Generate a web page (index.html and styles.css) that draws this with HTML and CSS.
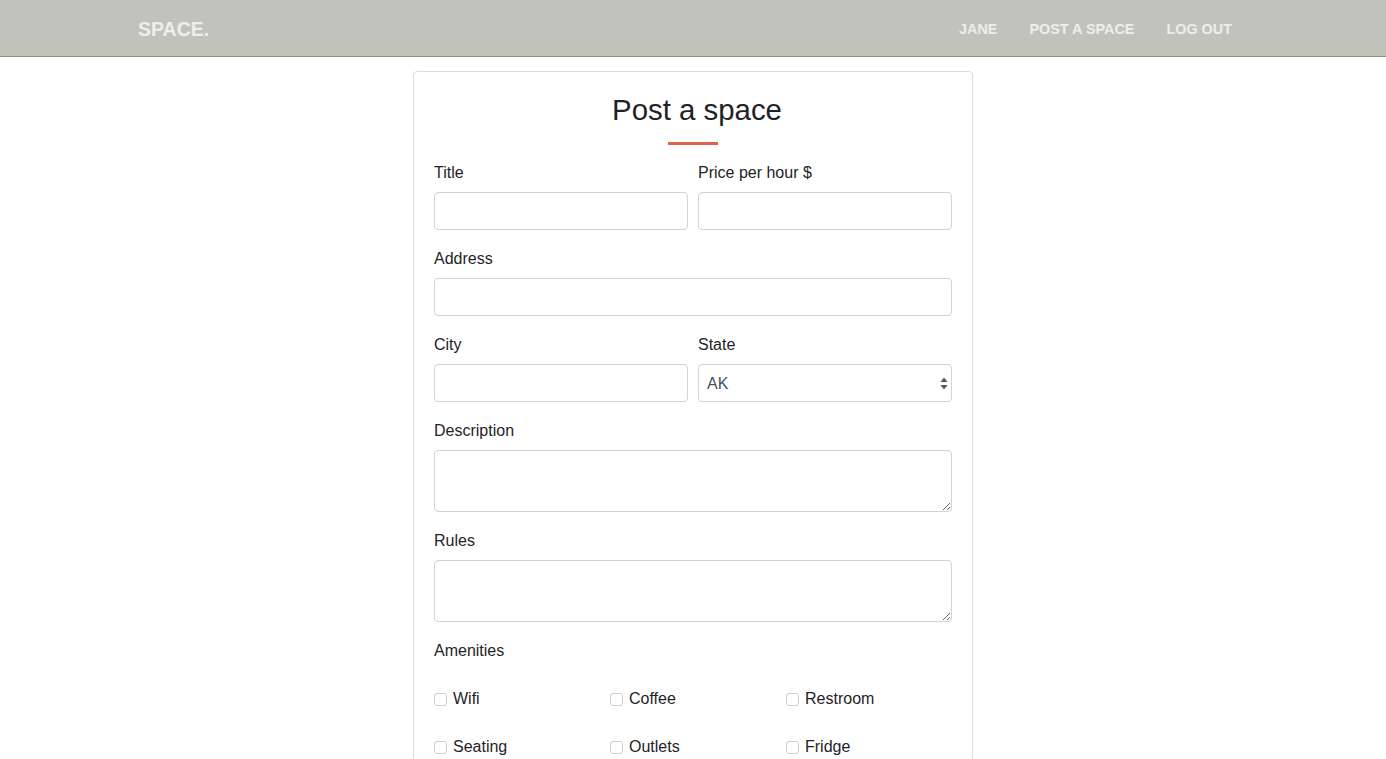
FILE: index.html
```html
<!DOCTYPE html>
<html>
<head>
<meta charset="utf-8">
<link rel="stylesheet" href="styles.css">
</head>
<body>
<nav class="navbar">
  <div class="nav-inner">
    <a class="brand" href="#">SPACE.</a>
    <div class="nav-links">
      <a href="#">JANE</a>
      <a href="#">POST A SPACE</a>
      <a href="#">LOG OUT</a>
    </div>
  </div>
</nav>
<main class="page">
  <div class="card">
    <h2 class="card-title">Post a space</h2>
    <div class="accent"></div>
    <form class="form">
      <div class="row">
        <div class="group">
          <label>Title</label>
          <input class="control" type="text">
        </div>
        <div class="group">
          <label>Price per hour $</label>
          <input class="control" type="text">
        </div>
      </div>
      <div class="group">
        <label>Address</label>
        <input class="control" type="text">
      </div>
      <div class="row">
        <div class="group">
          <label>City</label>
          <input class="control" type="text">
        </div>
        <div class="group">
          <label>State</label>
          <div class="select-wrap">
            <select class="control select">
              <option>AK</option>
            </select>
            <svg class="select-arrows" width="8" height="13" viewBox="0 0 8 13"><path d="M4 0.5 L7.5 5 L0.5 5 Z" fill="#555"/><path d="M4 12.5 L7.5 8 L0.5 8 Z" fill="#555"/></svg>
          </div>
        </div>
      </div>
      <div class="group">
        <label>Description</label>
        <textarea class="control area" rows="2"></textarea>
      </div>
      <div class="group">
        <label>Rules</label>
        <textarea class="control area" rows="2"></textarea>
      </div>
      <div class="group">
        <label>Amenities</label>
      </div>
      <div class="amenities">
        <label class="check"><input type="checkbox"><span>Wifi</span></label>
        <label class="check"><input type="checkbox"><span>Coffee</span></label>
        <label class="check"><input type="checkbox"><span>Restroom</span></label>
        <label class="check"><input type="checkbox"><span>Seating</span></label>
        <label class="check"><input type="checkbox"><span>Outlets</span></label>
        <label class="check"><input type="checkbox"><span>Fridge</span></label>
      </div>
    </form>
  </div>
</main>
</body>
</html>
```

FILE: styles.css
```css
* { box-sizing: border-box; }
html, body { margin: 0; padding: 0; }
body {
  font-family: "Liberation Sans", Arial, sans-serif;
  font-size: 16px;
  line-height: 1.5;
  color: #1f2326;
  background: #fff;
}
.navbar {
  height: 57px;
  background: #c1c3ba;
  border-bottom: 1px solid #8f947f;
}
.nav-inner {
  width: 1110px;
  margin: 0 auto;
  height: 56px;
  display: flex;
  align-items: center;
  justify-content: space-between;
  padding-top: 3px;
}
.brand {
  color: #eeeeec;
  font-weight: bold;
  font-size: 19.5px;
  text-decoration: none;
}
.nav-links { display: flex; }
.nav-links a {
  color: #eeeeec;
  font-weight: bold;
  font-size: 14.4px;
  text-decoration: none;
  padding: 0 16px;
}
.page { padding-top: 14px; }
.card {
  width: 560px;
  margin: 0 auto;
  border: 1px solid #dcdcdc;
  border-radius: 4px;
  padding: 20px 20px 40px;
}
.card-title {
  margin: 0;
  text-align: center;
  font-size: 29.4px;
  font-weight: normal;
  line-height: 34px;
  padding: 1px 0 0 8px;
}
.accent {
  width: 50px;
  height: 3px;
  background: #e0624a;
  margin: 15px auto 15px;
}
.row {
  display: grid;
  grid-template-columns: 1fr 1fr;
  column-gap: 10px;
}
.group { margin-bottom: 16px; }
.group label {
  display: block;
  margin-bottom: 7px;
  padding-top: 1px;
  line-height: 24px;
}
.control {
  display: block;
  width: 100%;
  height: 38px;
  border: 1px solid #ced4da;
  border-radius: 4px;
  background: #fff;
  font-family: inherit;
  font-size: 16px;
  color: #495057;
  padding: 6px 8px;
  margin: 0;
}
.select-wrap { position: relative; }
.select {
  appearance: none;
  -webkit-appearance: none;
}
.select-arrows {
  position: absolute;
  right: 4px;
  top: 13px;
}
.area {
  height: 62px;
  resize: vertical;
}
.amenities {
  display: grid;
  grid-template-columns: repeat(3, 176px);
  row-gap: 24px;
  padding-top: 8px;
}
.check {
  display: flex;
  align-items: center;
  line-height: 24px;
}
.check input {
  appearance: none;
  -webkit-appearance: none;
  width: 13px;
  height: 13px;
  margin: 1px 6px 0 0;
  border: 1px solid #cfcfcf;
  border-radius: 3px;
  background: #fff;
}
```
